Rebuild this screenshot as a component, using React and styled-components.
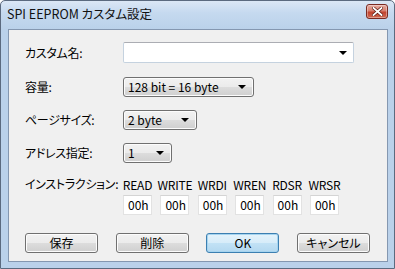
import React from "react";
import styled, { createGlobalStyle } from "styled-components";

const GlobalStyle = createGlobalStyle`
  html, body {
    margin: 0;
    padding: 0;
    background: #ffffff;
  }
  * {
    box-sizing: border-box;
  }
`;

const Window = styled.div`
  width: 395px;
  height: 269px;
  display: flex;
  flex-direction: column;
  border: 1px solid #5b6a7f;
  border-radius: 5px 5px 0 0;
  background: linear-gradient(#dbe7f5 0px, #c5d9ef 12px, #bad1ea 28px, #bad1ea 100%);
  font-family: "Noto Sans CJK JP", "Liberation Sans", sans-serif;
  font-size: 12px;
  color: #000;
  overflow: hidden;
`;

const TitleBar = styled.div`
  height: 28px;
  flex: none;
  display: flex;
  align-items: flex-start;
  justify-content: space-between;
  padding: 0 6px 0 6px;
`;

const Title = styled.div`
  margin-top: 5px;
  font-size: 12.5px;
  line-height: 16px;
  font-feature-settings: "palt";
  color: #111;
`;

const CloseButton = styled.div`
  margin-top: 3px;
  width: 22px;
  height: 15px;
  border: 1px solid #7a2a22;
  border-radius: 3px;
  background: linear-gradient(#e6aca2 0%, #d8806f 45%, #c2432f 55%, #cf6a52 100%);
  box-shadow: inset 0 0 0 1px rgba(255, 255, 255, 0.35);
  display: flex;
  align-items: center;
  justify-content: center;
`;

const Client = styled.div`
  flex: 1;
  margin: 0 6px 6px 7px;
  background: #f0f0f0;
  border: 1px solid #8497b0;
  padding: 12px 17px 0 16px;
  display: flex;
  flex-direction: column;
`;

const Form = styled.div`
  display: grid;
  grid-template-columns: 98px 1fr;
  row-gap: 13px;
  align-items: center;
`;

const Label = styled.div`
  font-size: 12px;
  line-height: 14px;
  font-feature-settings: "palt";
  letter-spacing: -0.3px;
  align-self: ${(p) => (p.$top ? "start" : "center")};
  margin-top: ${(p) => (p.$top ? "1px" : "0")};
`;

const EditCombo = styled.div`
  width: 231px;
  height: 21px;
  margin-bottom: 1px;
  background: #fff;
  border: 1px solid #c5d2df;
  border-top-color: #abadb3;
  border-radius: 2px;
  display: flex;
  align-items: center;
  justify-content: flex-end;
  padding-right: 6px;
`;

const DropCombo = styled.div`
  width: ${(p) => p.$w}px;
  height: 20px;
  border: 1px solid #707070;
  border-radius: 3px;
  background: linear-gradient(#f2f2f2 0%, #ebebeb 50%, #dddddd 50%, #cfcfcf 100%);
  box-shadow: inset 0 0 0 1px #fcfcfc;
  display: flex;
  align-items: center;
  justify-content: space-between;
  padding: 0 7px 0 4px;
  font-size: 12px;
  line-height: 14px;
`;

const Arrow = styled.span`
  width: 0;
  height: 0;
  border-left: 4px solid transparent;
  border-right: 4px solid transparent;
  border-top: 4px solid #000;
`;

const OpGrid = styled.div`
  display: grid;
  grid-template-columns: repeat(6, 29px);
  column-gap: 8.4px;
  row-gap: 3px;
  margin-top: 2px;
`;

const OpName = styled.div`
  text-align: center;
  font-size: 12px;
  line-height: 14px;
  white-space: nowrap;
  letter-spacing: -0.2px;
  justify-self: center;
`;

const OpInput = styled.div`
  height: 20px;
  background: #fff;
  border: 1px solid #e2e2e2;
  border-top-color: #d4d4d4;
  display: flex;
  align-items: center;
  padding-left: 4px;
  font-size: 12px;
  line-height: 14px;
`;

const ButtonRow = styled.div`
  margin-top: 18px;
  display: flex;
  justify-content: space-between;
`;

const Button = styled.div`
  width: 73px;
  height: 20px;
  border: 1px solid ${(p) => (p.$default ? "#3c7fb1" : "#707070")};
  border-radius: 3px;
  background: ${(p) =>
    p.$default
      ? "linear-gradient(#e5f3fb 0%, #d6ecf9 50%, #c2e2f5 50%, #b3d8f0 100%)"
      : "linear-gradient(#f2f2f2 0%, #ebebeb 50%, #dddddd 50%, #cfcfcf 100%)"};
  box-shadow: inset 0 0 0 1px ${(p) => (p.$default ? "#a6d4ef" : "#fcfcfc")};
  display: flex;
  align-items: center;
  justify-content: center;
  font-size: 12px;
  line-height: 14px;
  font-feature-settings: "palt";
`;

const ops = ["READ", "WRITE", "WRDI", "WREN", "RDSR", "WRSR"];

export default function App() {
  return (
    <>
      <GlobalStyle />
      <Window>
        <TitleBar>
          <Title>SPI EEPROM カスタム設定</Title>
          <CloseButton>
            <svg width="11" height="9" viewBox="0 0 11 9">
              <path
                d="M1.5 1 L9.5 8 M9.5 1 L1.5 8"
                stroke="#5a1a12"
                strokeWidth="3.2"
                strokeLinecap="square"
              />
              <path
                d="M1.5 1 L9.5 8 M9.5 1 L1.5 8"
                stroke="#ffffff"
                strokeWidth="1.8"
                strokeLinecap="square"
              />
            </svg>
          </CloseButton>
        </TitleBar>
        <Client>
          <Form>
            <Label>カスタム名:</Label>
            <EditCombo>
              <Arrow />
            </EditCombo>

            <Label>容量:</Label>
            <DropCombo $w={131}>
              <span>128 bit = 16 byte</span>
              <Arrow />
            </DropCombo>

            <Label>ページサイズ:</Label>
            <DropCombo $w={74}>
              <span>2 byte</span>
              <Arrow />
            </DropCombo>

            <Label>アドレス指定:</Label>
            <DropCombo $w={49}>
              <span>1</span>
              <Arrow />
            </DropCombo>

            <Label $top>インストラクション:</Label>
            <OpGrid>
              {ops.map((op) => (
                <OpName key={op}>{op}</OpName>
              ))}
              {ops.map((op) => (
                <OpInput key={op}>00h</OpInput>
              ))}
            </OpGrid>
          </Form>
          <ButtonRow>
            <Button>保存</Button>
            <Button>削除</Button>
            <Button $default>OK</Button>
            <Button>キャンセル</Button>
          </ButtonRow>
        </Client>
      </Window>
    </>
  );
}
